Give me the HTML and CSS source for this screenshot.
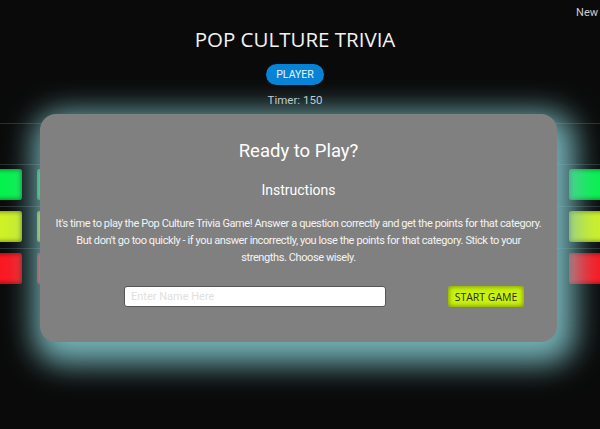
FILE: index.html
```html
<!DOCTYPE html>
<html>
<head>
<meta charset="utf-8">
<link rel="stylesheet" href="styles.css">
</head>
<body>
<div class="page">
  <div class="topbar"><span class="new-link">New</span></div>
  <header class="header">
    <h1 class="title">POP CULTURE TRIVIA</h1>
    <span class="pill">PLAYER</span>
    <div class="timer">Timer: 150</div>
  </header>
  <section class="board">
    <div class="row row-head"></div>
    <div class="row">
      <div class="tile green"></div><div class="tile green"></div><div class="tile green"></div><div class="tile green"></div><div class="tile green"></div><div class="tile green"></div>
    </div>
    <div class="row">
      <div class="tile yellow"></div><div class="tile yellow"></div><div class="tile yellow"></div><div class="tile yellow"></div><div class="tile yellow"></div><div class="tile yellow"></div>
    </div>
    <div class="row">
      <div class="tile red"></div><div class="tile red"></div><div class="tile red"></div><div class="tile red"></div><div class="tile red"></div><div class="tile red"></div>
    </div>
  </section>
</div>
<div class="modal">
  <h2 class="modal-title">Ready to Play?</h2>
  <h3 class="modal-sub">Instructions</h3>
  <p class="modal-text">It's time to play the Pop Culture Trivia Game! Answer a question correctly and get the points for that category. But don't go too quickly - if you answer incorrectly, you lose the points for that category. Stick to your strengths. Choose wisely.</p>
  <div class="form-row">
    <input class="name-input" type="text" placeholder="Enter Name Here">
    <button class="start-btn">START GAME</button>
  </div>
</div>
</body>
</html>
```
FILE: styles.css
```css
html, body {
  margin: 0;
  padding: 0;
  background: #0a0a0a;
  overflow: hidden;
  width: 600px;
  height: 429px;
  font-family: Roboto, "Liberation Sans", sans-serif;
}
.page {
  position: relative;
}
.topbar {
  height: 20px;
  display: flex;
  justify-content: flex-end;
  padding: 0 2px 0 0;
}
.new-link {
  color: #cfcfcf;
  font-size: 11px;
  line-height: 26px;
}
.header {
  display: flex;
  flex-direction: column;
  align-items: center;
  padding-right: 10px;
}
.title {
  margin: 6px 0 0;
  color: #f2f2f2;
  font-family: "Open Sans", sans-serif;
  font-weight: 500;
  font-size: 20.5px;
  line-height: 26px;
}
.pill {
  margin-top: 12px;
  height: 21px;
  padding: 0 10px;
  border-radius: 11px;
  background: #0783d6;
  color: #eaf4ff;
  font-size: 10.5px;
  line-height: 21px;
}
.timer {
  margin-top: 7px;
  color: #cfcfcf;
  font-size: 11.5px;
  line-height: 16px;
}
.board {
  margin-top: 15px;
  margin-left: -96px;
  width: 800px;
}
.row {
  display: flex;
  gap: 15px;
  border-top: 1px solid #2a2e2f;
  height: 41px;
  padding-top: 4px;
  box-sizing: border-box;
}
.row-head {
  height: 41px;
}
.row + .row {
  height: 42px;
}
.tile {
  width: 118px;
  height: 31px;
  border-radius: 3px;
  flex: none;
}
.green {
  background: #06f24e;
  box-shadow: inset 0 0 4px 1px rgba(0, 90, 30, 0.7);
}
.yellow {
  background: #cff225;
  box-shadow: inset 0 0 4px 1px rgba(90, 100, 0, 0.7);
}
.red {
  background: #fb1722;
  box-shadow: inset 0 0 4px 1px rgba(110, 0, 0, 0.7);
}
.modal {
  position: absolute;
  left: 40px;
  top: 114px;
  width: 517px;
  height: 228px;
  box-sizing: border-box;
  background: #808080;
  border-radius: 16px;
  box-shadow: 6px 10px 30px 12px rgba(122, 186, 192, 0.95);
  display: flex;
  flex-direction: column;
  align-items: center;
  color: #fff;
}
.modal-title {
  margin: 25px 0 0;
  font-weight: 400;
  font-size: 18.5px;
  line-height: 24px;
}
.modal-sub {
  margin: 18px 0 0;
  font-weight: 400;
  font-size: 14px;
  line-height: 18px;
}
.modal-text {
  margin: 16px 14px 0;
  font-size: 11px;
  letter-spacing: -0.4px;
  line-height: 17px;
  text-align: center;
  color: #f4f4f4;
}
.form-row {
  align-self: stretch;
  display: flex;
  justify-content: space-between;
  align-items: center;
  padding: 0 33px 0 84px;
  margin-top: 20px;
}
.name-input {
  width: 262px;
  height: 21px;
  box-sizing: border-box;
  border: 1px solid #555;
  border-radius: 3px;
  background: #fff;
  padding: 0 6px;
  font-family: Roboto, sans-serif;
  font-size: 11px;
  outline: none;
}
.name-input::placeholder {
  color: #e0e0e0;
}
.start-btn {
  width: 76px;
  height: 21px;
  border: none;
  border-radius: 3px;
  background: #c9f211;
  box-shadow: inset 0 0 4px 1px rgba(110, 130, 0, 0.8);
  color: #2b2b10;
  font-family: "Open Sans", sans-serif;
  font-size: 10.5px;
  padding: 0;
}
```
